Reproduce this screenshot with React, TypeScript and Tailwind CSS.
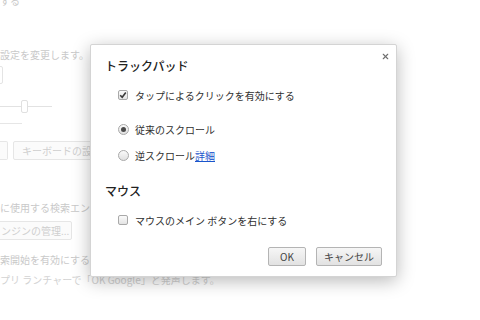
import { X } from "lucide-react"

const font = { fontFamily: '"Noto Sans CJK JP", "Liberation Sans", sans-serif' }

const Checkbox = ({ checked }: { checked?: boolean }) => (
  <span className="flex h-[10px] w-[10px] items-center justify-center rounded-[2px] border border-[#a9a9a9] bg-gradient-to-b from-[#fafafa] to-[#e4e4e4]">
    {checked && (
      <svg width="8" height="8" viewBox="0 0 8 8">
        <path d="M1.2 4.2 L3.2 6.2 L6.8 1.4" fill="none" stroke="#3a3a3a" strokeWidth="1.6" />
      </svg>
    )}
  </span>
)

const Radio = ({ checked }: { checked?: boolean }) => (
  <span className="flex h-[11px] w-[11px] items-center justify-center rounded-full border border-[#a9a9a9] bg-gradient-to-b from-[#fafafa] to-[#e0e0e0]">
    {checked && <span className="h-[5px] w-[5px] rounded-full bg-[#4a4a4a]" />}
  </span>
)

const Row = ({ control, children, className }: { control: React.ReactNode; children: React.ReactNode; className: string }) => (
  <div className={`flex h-[16px] items-center pl-[13px] ${className}`}>
    <span className="flex w-[17px]">{control}</span>
    <span className="text-[10px] text-[#303030]">{children}</span>
  </div>
)

const BgButton = ({ children, className }: { children?: React.ReactNode; className: string }) => (
  <div className={`flex h-[19px] items-center rounded-[2px] border border-[#e6e6e6] bg-[#fbfbfb] text-[10px] text-[#cfcfcf] ${className}`}>
    {children}
  </div>
)

export default function App() {
  return (
    <div className="relative h-[320px] w-[480px] overflow-hidden bg-white" style={font}>
      {/* faded settings page */}
      <div className="flex flex-col text-[10px] text-[#c9c9c9]">
        <div className="-mt-[7px] h-[12px]">する</div>
        <div className="mt-[44px] h-[12px] leading-[12px]">設定を変更します。</div>
        <div className="ml-[-40px] mt-[5px] h-[18px] w-[43px] rounded-[2px] border border-[#e4e4e4]" />
        <div className="relative mt-[16px] h-[14px] w-[52px]">
          <div className="absolute left-0 right-0 top-[6px] h-px bg-[#e2e2e2]" />
          <div className="absolute left-[21px] top-0 h-[13px] w-[7px] rounded-[2px] border border-[#e0e0e0] bg-white" />
        </div>
        <div className="mt-[9px] h-px w-[22px] bg-[#e6e6e6]" />
        <div className="mt-[17px] flex gap-[5px]">
          <BgButton className="w-[8px] rounded-l-none border-l-0" />
          <BgButton className="w-[120px] pl-[8px]">キーボードの設定...</BgButton>
        </div>
        <div className="mt-[42px] h-[12px] leading-[12px]">に使用する検索エンジン</div>
        <BgButton className="ml-[-8px] mt-[7px] w-[80px] rounded-l-none pl-[8px]">ンジンの管理...</BgButton>
        <div className="mt-[14px] h-[12px] leading-[12px]">索開始を有効にする</div>
        <div className="mt-[8px] h-[12px] leading-[12px] text-[#d2d2d2]">プリ ランチャーで「OK Google」と発声します。</div>
      </div>

      {/* dialog */}
      <div className="absolute left-[90px] top-[44px] flex h-[233px] w-[307px] flex-col rounded-[2px] border border-[#d4d4d4] bg-white px-[14px] pt-[13px] shadow-[0_4px_18px_rgba(0,0,0,0.28)]">
        <button className="absolute right-[6px] top-[7px] text-[#6f6f6f]">
          <X size={9} strokeWidth={3} />
        </button>
        <div className="h-[16px] text-[12px] font-medium leading-[16px] text-[#222]">トラックパッド</div>
        <Row className="mt-[13px]" control={<Checkbox checked />}>
          タップによるクリックを有効にする
        </Row>
        <Row className="mt-[18px]" control={<Radio checked />}>
          従来のスクロール
        </Row>
        <Row className="mt-[10px]" control={<Radio />}>
          逆スクロール<a className="text-[#1a55cc] underline">詳細</a>
        </Row>
        <div className="mt-[20px] h-[16px] text-[12px] font-medium leading-[16px] text-[#222]">マウス</div>
        <Row className="mt-[13px]" control={<Checkbox />}>
          マウスのメイン ボタンを右にする
        </Row>
        <div className="mt-[19px] flex justify-end gap-[10px]">
          <button className="h-[19px] w-[38px] rounded-[2px] border border-[#b4b4b4] bg-gradient-to-b from-[#f6f6f6] to-[#e2e2e2] text-[10px] text-[#444]">
            OK
          </button>
          <button className="h-[19px] w-[66px] rounded-[2px] border border-[#b4b4b4] bg-gradient-to-b from-[#f6f6f6] to-[#e2e2e2] text-[10px] text-[#444]">
            キャンセル
          </button>
        </div>
      </div>
    </div>
  )
}
